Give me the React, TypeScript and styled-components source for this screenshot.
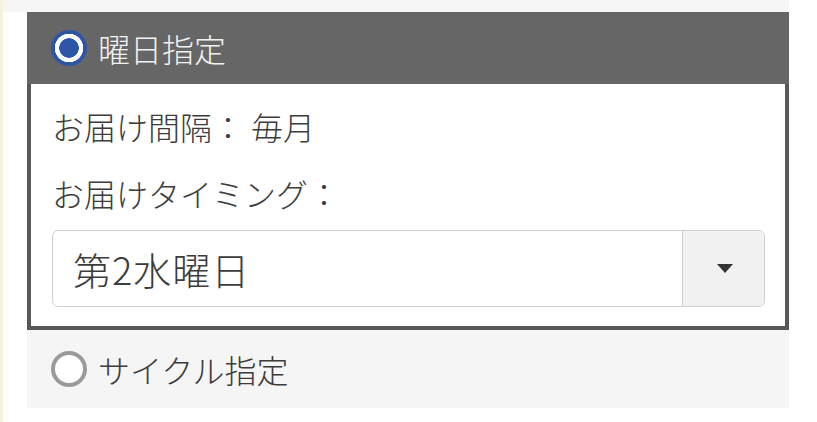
import { createGlobalStyle } from "styled-components";
import styled from "styled-components";

const GlobalStyle = createGlobalStyle`
  body {
    margin: 0;
    background: #fff;
    font-family: "Noto Sans CJK JP", "Noto Sans", sans-serif;
    font-weight: 300;
  }
`;

const Page = styled.div`
  min-height: 422px;
  box-sizing: border-box;
  border-left: 3px solid #f7f2df;
  padding-right: 28px;
`;

const TopStrip = styled.div`
  height: 12px;
  background: #f6f6f6;
`;

const Options = styled.div`
  margin-left: 24px;
`;

const OptionRow = styled.div<{ $active?: boolean }>`
  display: flex;
  align-items: center;
  gap: 11px;
  height: ${(p) => (p.$active ? "72px" : "78px")};
  padding-left: 24px;
  background: ${(p) => (p.$active ? "#666" : "#f5f5f5")};
  color: ${(p) => (p.$active ? "#f2f2f2" : "#3c3c3c")};
  font-size: 32px;
  line-height: 1;
`;

const Radio = styled.span<{ $checked?: boolean }>`
  width: 36px;
  height: 36px;
  flex: none;
  box-sizing: border-box;
  border-radius: 50%;
  ${(p) =>
    p.$checked
      ? `background: radial-gradient(circle, #2d55a6 0 9.5px, #fff 10px 14px, #2d55a6 14.5px);`
      : `border: 4px solid #9a9a9a; background: #fff;`}
`;

const Body = styled.div`
  background: #fff;
  border: 4px solid #585858;
  border-top: none;
  padding: 18px 20px 19px 21px;
`;

const Label = styled.div<{ $gap?: number }>`
  font-size: 32px;
  line-height: 48px;
  color: #3c3c3c;
  margin-bottom: ${(p) => p.$gap ?? 0}px;
  white-space: pre;
`;

const Select = styled.div`
  display: flex;
  height: 77px;
  box-sizing: border-box;
  border: 1px solid #cfcfcf;
  border-radius: 6px;
  overflow: hidden;
`;

const SelectValue = styled.div`
  flex: 1;
  display: flex;
  align-items: center;
  padding-left: 20px;
  font-size: 38px;
  letter-spacing: 1px;
  color: #3c3c3c;
`;

const CaretButton = styled.div`
  width: 81px;
  display: flex;
  align-items: center;
  justify-content: center;
  background: #f1f1f1;
  border-left: 1px solid #cfcfcf;
`;

const Caret = styled.span`
  width: 0;
  height: 0;
  border-left: 8px solid transparent;
  border-right: 8px solid transparent;
  border-top: 9px solid #333;
  margin-left: 2px;
`;

export default function App() {
  return (
    <>
      <GlobalStyle />
      <Page>
        <TopStrip />
        <Options>
          <OptionRow $active>
            <Radio $checked />
            曜日指定
          </OptionRow>
          <Body>
            <Label $gap={19}>{"お届け間隔： 毎月"}</Label>
            <Label $gap={13}>お届けタイミング：</Label>
            <Select role="combobox">
              <SelectValue>第2水曜日</SelectValue>
              <CaretButton>
                <Caret />
              </CaretButton>
            </Select>
          </Body>
          <OptionRow>
            <Radio />
            サイクル指定
          </OptionRow>
        </Options>
      </Page>
    </>
  );
}
